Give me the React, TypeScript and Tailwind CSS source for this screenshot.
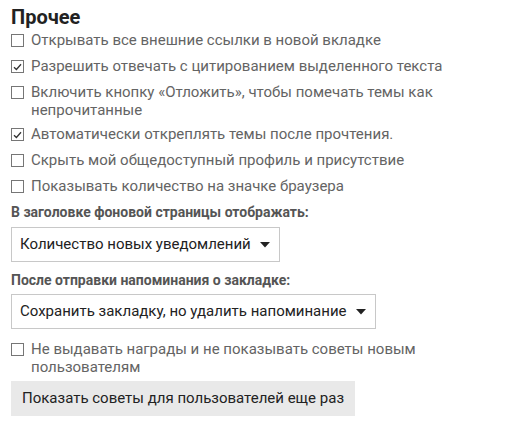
import React from 'react';

const OPTIONS = [
  { label: 'Открывать все внешние ссылки в новой вкладке', checked: false },
  { label: 'Разрешить отвечать с цитированием выделенного текста', checked: true },
  { label: 'Включить кнопку «Отложить», чтобы помечать темы как непрочитанные', checked: false, tight: true },
  { label: 'Автоматически откреплять темы после прочтения.', checked: true },
  { label: 'Скрыть мой общедоступный профиль и присутствие', checked: false },
  { label: 'Показывать количество на значке браузера', checked: false },
];

function Box({ checked }: { checked: boolean }) {
  return (
    <span className="mt-[3px] flex h-[13px] w-[13px] shrink-0 items-center justify-center border border-[#767676] bg-white">
      {checked && (
        <svg width="9" height="8" viewBox="0 0 9 8" fill="none">
          <path d="M1 4.2 L3.4 6.5 L8 1.3" stroke="#333" strokeWidth="1.3" />
        </svg>
      )}
    </span>
  );
}

function Check({ label, checked, tight }: { label: string; checked: boolean; tight?: boolean }) {
  return (
    <label
      className={
        'flex items-start gap-[7px] text-[15px] leading-[18px] text-[#646464]' + (tight ? ' -mb-[2px]' : '')
      }
    >
      <Box checked={checked} />
      <span>{label}</span>
    </label>
  );
}

function Select({ value }: { value: string }) {
  return (
    <div className="inline-flex h-[35px] items-center gap-[9px] border border-[#c8c8c8] bg-white pl-[8px] pr-[9px] text-[15px] text-[#222]">
      <span>{value}</span>
      <svg width="10" height="6" viewBox="0 0 10 6">
        <path d="M0 0 H10 L5 5.5 Z" fill="#222" />
      </svg>
    </div>
  );
}

export default function App() {
  return (
    <div className="w-[531px] bg-white px-[11px] pt-[4px] font-['Roboto',sans-serif]">
      <h2 className="mb-[1px] text-[20px] font-bold leading-[26px] text-[#222]">Прочее</h2>
      <div className="flex w-[480px] flex-col gap-[8px]">
        {OPTIONS.map((o) => (
          <Check key={o.label} label={o.label} checked={o.checked} tight={o.tight} />
        ))}
      </div>

      <div className="mt-[8px] text-[14px] font-bold leading-[18px] text-[#555]">
        В заголовке фоновой страницы отображать:
      </div>
      <div className="mt-[6px] flex">
        <Select value="Количество новых уведомлений" />
      </div>

      <div className="mt-[9px] text-[14px] font-bold leading-[18px] text-[#555]">
        После отправки напоминания о закладке:
      </div>
      <div className="mt-[5px] flex">
        <Select value="Сохранить закладку, но удалить напоминание" />
      </div>

      <div className="mt-[11px] w-[430px]">
        <Check label="Не выдавать награды и не показывать советы новым пользователям" checked={false} />
      </div>
      <button className="mt-[5px] h-[35px] bg-[#e9e9e9] px-[11px] text-[15px] text-[#222]">
        Показать советы для пользователей еще раз
      </button>
    </div>
  );
}
